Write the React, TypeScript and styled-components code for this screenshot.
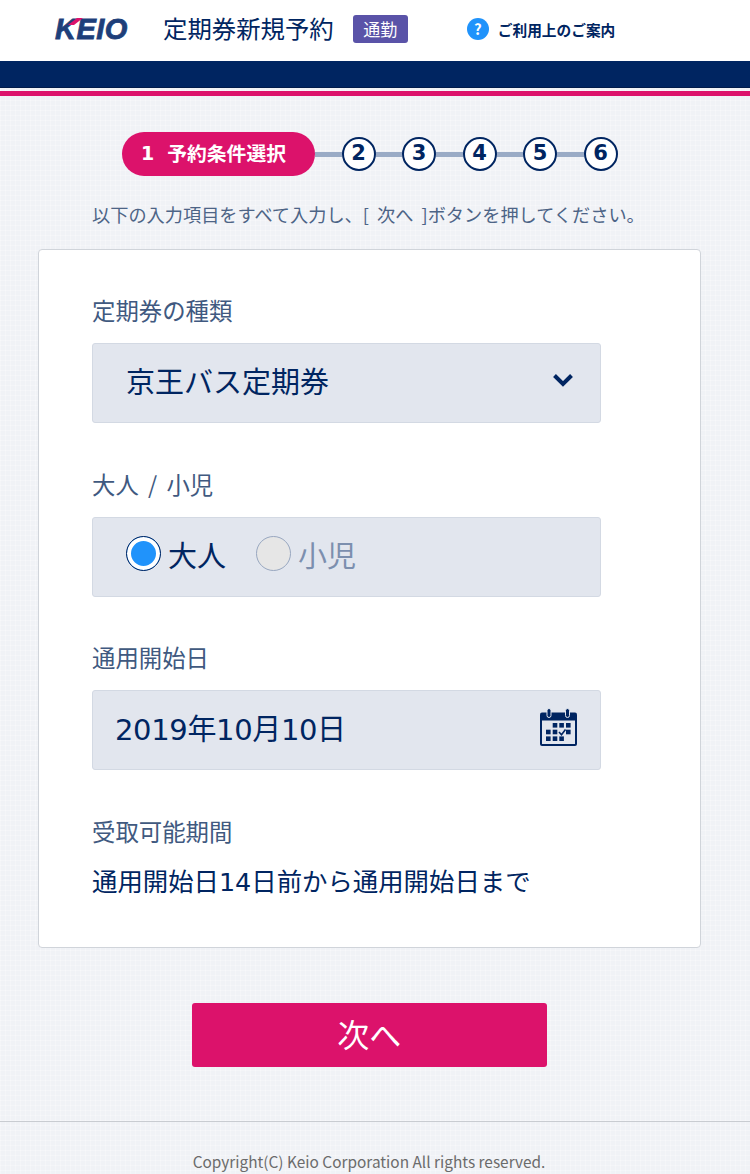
import styled, { createGlobalStyle } from "styled-components";

const NAVY = "#002561";
const PINK = "#dc126b";
const FONT = `"Noto Sans CJK JP", "Noto Sans", sans-serif`;
const DIGIT_FONT = `"DejaVu Sans", "Noto Sans CJK JP", sans-serif`;

const GlobalStyle = createGlobalStyle`
  html, body {
    margin: 0;
    padding: 0;
    font-family: ${FONT};
    color: ${NAVY};
    background-color: #f0f2f6;
    background-image:
      linear-gradient(rgba(255, 255, 255, 0.25) 1px, transparent 1px),
      linear-gradient(90deg, rgba(255, 255, 255, 0.25) 1px, transparent 1px);
    background-size: 5px 5px;
  }
`;

const Page = styled.div`
  width: 750px;
  height: 1174px;
  overflow: hidden;
`;

const Header = styled.header`
  height: 61px;
  box-sizing: border-box;
  padding-bottom: 3px;
  background: #fff;
  display: flex;
  align-items: center;
`;

const Logo = styled.div`
  position: relative;
  width: 75px;
  margin-left: 55px;
  font-family: "Liberation Sans", sans-serif;
  font-size: 29px;
  font-weight: 700;
  font-style: italic;
  line-height: 28px;
  letter-spacing: 0.5px;
  color: #1e3f7a;
  -webkit-text-stroke: 0.8px #1e3f7a;

  svg {
    position: absolute;
    left: 13px;
    top: 3px;
  }
`;

const Title = styled.h1`
  margin: 0 0 2px 33px;
  font-size: 24.4px;
  font-weight: 400;
  line-height: 30px;
  color: ${NAVY};
`;

const Tag = styled.span`
  margin-left: 19px;
  width: 55px;
  height: 28px;
  box-sizing: border-box;
  border-radius: 3px;
  background: #5a53a8;
  color: #fff;
  font-size: 17px;
  line-height: 28px;
  text-align: center;
`;

const GuideLink = styled.a`
  display: flex;
  align-items: center;
  gap: 9px;
  margin-left: 59px;
  font-size: 14.7px;
  font-weight: 700;
  color: ${NAVY};
`;

const HelpMark = styled.span`
  width: 22px;
  height: 22px;
  border-radius: 50%;
  background: #2093fb;
  color: #fff;
  font-size: 15px;
  font-weight: 700;
  line-height: 22px;
  text-align: center;
`;

const NavBand = styled.div`
  height: 26px;
  background: ${NAVY};
  border-bottom: 1px solid #001b4a;
`;

const PinkRule = styled.div`
  height: 5px;
  margin-top: 3px;
  background: ${PINK};
`;

const Stepper = styled.ol`
  display: flex;
  align-items: center;
  list-style: none;
  margin: 36px 0 0 122px;
  padding: 0;
`;

const ActiveStep = styled.li`
  display: flex;
  align-items: center;
  justify-content: center;
  gap: 13px;
  width: 193px;
  height: 44px;
  box-sizing: border-box;
  padding: 0 10px 3px 0;
  border-radius: 22px;
  background: ${PINK};
  color: #fff;
  font-size: 19.8px;
  font-weight: 700;
`;

const StepNumber = styled.span`
  font-family: "DejaVu Sans", sans-serif;
  font-size: 19px;
`;

const Connector = styled.li`
  width: 26.5px;
  height: 5px;
  background: #9aabc6;
`;

const StepCircle = styled.li`
  width: 34px;
  height: 34px;
  box-sizing: border-box;
  border: 2px solid ${NAVY};
  border-radius: 50%;
  background: #fff;
  color: ${NAVY};
  font-family: "DejaVu Sans", sans-serif;
  font-size: 21px;
  font-weight: 700;
  line-height: 29px;
  text-align: center;
`;

const Lead = styled.p`
  margin: 25px 0 0 92px;
  font-size: 18.2px;
  line-height: 26px;
  word-spacing: 4px;
  color: #4d6486;
  white-space: nowrap;
`;

const Card = styled.section`
  width: 663px;
  height: 699px;
  box-sizing: border-box;
  margin: 22px 0 0 38px;
  padding: 45px 53px 0;
  background: #fff;
  border: 1px solid #d0d4da;
  border-radius: 4px;
`;

const Field = styled.div`
  margin-bottom: 45.5px;
`;

const Label = styled.div`
  margin: -1px 0 17px;
  font-size: 23.4px;
  line-height: 32px;
  word-spacing: 4px;
  color: #405980;
`;

const Control = styled.div<{ $pad: number; $digits?: boolean }>`
  display: flex;
  align-items: center;
  justify-content: space-between;
  width: 509px;
  height: 80px;
  box-sizing: border-box;
  padding: 0 23px 6px ${(p) => p.$pad}px;
  background: #e2e6ee;
  border: 1px solid #d3d9e3;
  border-radius: 3px;
  font-family: ${(p) => (p.$digits ? DIGIT_FONT : FONT)};
  font-size: 29px;
  letter-spacing: ${(p) => (p.$digits ? "-0.35px" : "0")};
  color: ${NAVY};
`;

const RadioGroup = styled.div`
  display: flex;
  align-items: center;
  gap: 30px;
`;

const RadioItem = styled.label<{ $off?: boolean }>`
  display: flex;
  align-items: center;
  gap: 7px;
  color: ${(p) => (p.$off ? "#7c8fae" : NAVY)};
`;

const RadioDot = styled.span<{ $on?: boolean }>`
  width: 35px;
  height: 35px;
  box-sizing: border-box;
  border-radius: 50%;
  border: 1px solid ${(p) => (p.$on ? NAVY : "#98a7c0")};
  background: ${(p) => (p.$on ? "#2093fb" : "#e6e6e6")};
  box-shadow: ${(p) => (p.$on ? "inset 0 0 0 4px #fff" : "none")};
`;

const Note = styled.div`
  margin-top: 0;
  font-family: ${DIGIT_FONT};
  font-size: 25.4px;
  line-height: 36px;
  color: ${NAVY};
`;

const NextButton = styled.button`
  display: block;
  width: 354.5px;
  height: 64px;
  margin: 55px 0 0 192px;
  padding: 0 0 5px;
  border: none;
  border-radius: 3px;
  background: ${PINK};
  color: #fff;
  font-family: ${FONT};
  font-size: 32px;
  font-weight: 400;
`;

const Footer = styled.footer`
  margin-top: 54px;
  border-top: 1px solid #c9ccd1;
  padding: 28px 12px 0 0;
  text-align: center;
  font-size: 15.4px;
  line-height: 22px;
  color: #6b6b6b;
`;

const ChevronMark = styled.svg`
  margin-right: 3px;
`;

function Chevron() {
  return (
    <ChevronMark width="22" height="14" viewBox="0 0 22 14" aria-hidden="true">
      <path d="M2.5 2.5 L11 11 L19.5 2.5" fill="none" stroke={NAVY} strokeWidth="4" />
    </ChevronMark>
  );
}

function CalendarIcon() {
  const cells = [
    [12.7, 15], [19.3, 15], [26, 15],
    [6, 21.7], [12.7, 21.7], [26, 21.7],
    [6, 28.4], [12.7, 28.4], [19.3, 28.4],
  ];
  return (
    <svg width="37" height="38" viewBox="0 0 37 38" aria-hidden="true">
      <rect x="0" y="4.5" width="37" height="33.5" rx="2" fill={NAVY} />
      <rect x="2" y="12.5" width="33" height="23.5" fill="#e2e6ee" />
      <rect x="7" y="0.5" width="4" height="9" rx="2" fill={NAVY} stroke="#e2e6ee" />
      <rect x="25.5" y="0.5" width="4" height="9" rx="2" fill={NAVY} stroke="#e2e6ee" />
      {cells.map(([x, y]) => (
        <rect key={`${x}-${y}`} x={x} y={y} width="4.6" height="4.6" fill={NAVY} />
      ))}
      <path d="M19 24 L21.5 26.8 L25.5 21.5" fill="none" stroke={NAVY} strokeWidth="1.6" />
    </svg>
  );
}

export default function App() {
  return (
    <Page>
      <GlobalStyle />
      <Header>
        <Logo>
          KEIO
          <svg width="15" height="7" viewBox="0 0 15 7" aria-hidden="true">
            <path d="M0 7 L9 0 H15 L6 7 Z" fill={PINK} />
          </svg>
        </Logo>
        <Title>定期券新規予約</Title>
        <Tag>通勤</Tag>
        <GuideLink>
          <HelpMark>?</HelpMark>
          ご利用上のご案内
        </GuideLink>
      </Header>
      <NavBand />
      <PinkRule />

      <Stepper>
        <ActiveStep>
          <StepNumber>1</StepNumber>
          <span>予約条件選択</span>
        </ActiveStep>
        {[2, 3, 4, 5, 6].map((n) => [
          <Connector key={`c${n}`} />,
          <StepCircle key={n}>{n}</StepCircle>,
        ])}
      </Stepper>

      <Lead>以下の入力項目をすべて入力し、[ 次へ ]ボタンを押してください。</Lead>

      <Card>
        <Field>
          <Label>定期券の種類</Label>
          <Control $pad={33}>
            京王バス定期券
            <Chevron />
          </Control>
        </Field>
        <Field>
          <Label>大人 / 小児</Label>
          <Control $pad={33}>
            <RadioGroup>
              <RadioItem>
                <RadioDot $on />
                大人
              </RadioItem>
              <RadioItem $off>
                <RadioDot />
                小児
              </RadioItem>
            </RadioGroup>
          </Control>
        </Field>
        <Field>
          <Label>通用開始日</Label>
          <Control $pad={22} $digits>
            2019年10月10日
            <CalendarIcon />
          </Control>
        </Field>
        <Label>受取可能期間</Label>
        <Note>通用開始日14日前から通用開始日まで</Note>
      </Card>

      <NextButton>次へ</NextButton>

      <Footer>Copyright(C) Keio Corporation All rights reserved.</Footer>
    </Page>
  );
}
